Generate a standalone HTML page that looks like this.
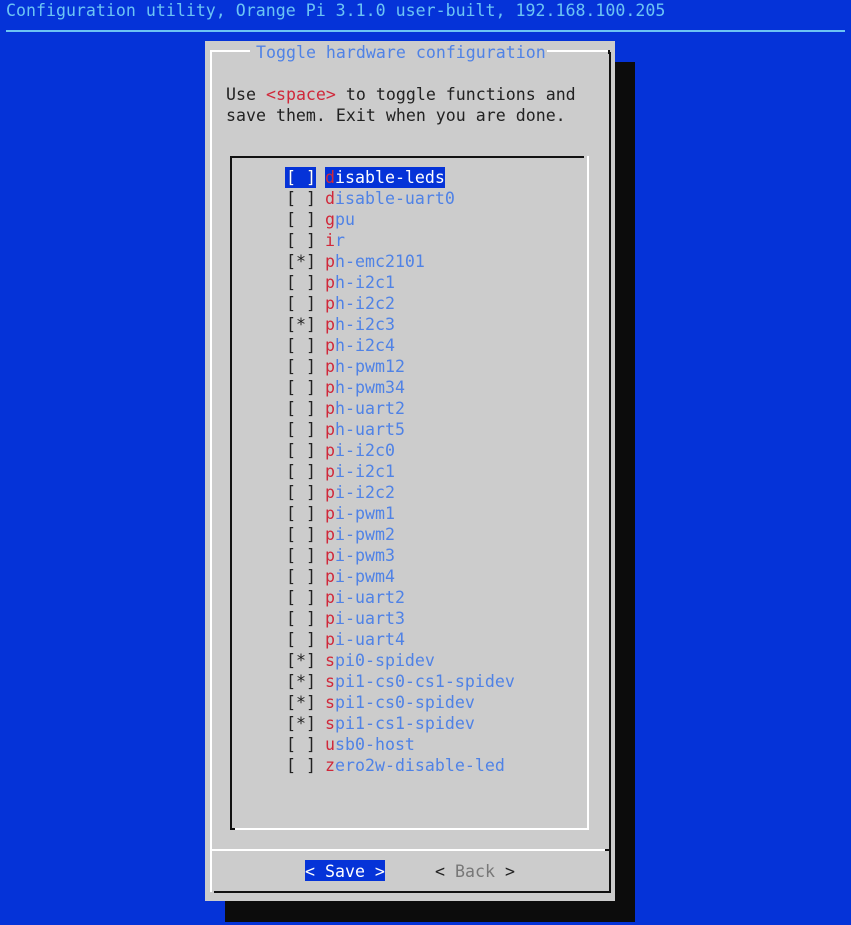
<!DOCTYPE html>
<html><head><meta charset="utf-8"><style>
html,body{margin:0;padding:0}
body{width:851px;height:925px;background:#0533d8;position:relative;overflow:hidden;font-family:"DejaVu Sans Mono","Liberation Mono",monospace;font-size:16.6px}
.a{position:absolute;white-space:pre;line-height:21px}
.b{position:absolute}
.r{color:#d0283a}
.l{color:#4f82e6}
.k{color:#222}
</style></head><body>
<div class="a" style="left:6px;top:0px;color:#6cc4f4">Configuration utility, Orange Pi 3.1.0 user-built, 192.168.100.205</div>
<div class="b" style="left:6px;top:30px;width:839px;height:2px;background:#6cc4f4"></div>
<div class="b" style="left:225px;top:62px;width:410px;height:860px;background:#0c0c0c"></div>
<div class="b" style="left:205px;top:41px;width:410px;height:860px;background:#cccccc"></div>
<div class="b" style="left:210px;top:50px;width:40px;height:2px;background:#fff"></div>
<div class="b" style="left:547px;top:50px;width:63px;height:2px;background:#fff"></div>
<div class="b" style="left:608px;top:50px;width:2px;height:4px;background:#111"></div>
<div class="b" style="left:210px;top:50px;width:2px;height:842px;background:#fff"></div>
<div class="b" style="left:609px;top:52px;width:2px;height:840px;background:#111"></div>
<div class="b" style="left:214px;top:891px;width:397px;height:2px;background:#111"></div>
<div class="a" style="left:256px;top:42px;color:#4f82e6">Toggle hardware configuration</div>
<div class="a k" style="left:226px;top:84px">Use <span class="r">&lt;space&gt;</span> to toggle functions and
save them. Exit when you are done.</div>
<div class="b" style="left:230px;top:156px;width:354px;height:2px;background:#111"></div>
<div class="b" style="left:230px;top:156px;width:2px;height:674px;background:#111"></div>
<div class="b" style="left:230px;top:828px;width:5px;height:2px;background:#111"></div>
<div class="b" style="left:587px;top:156px;width:2px;height:674px;background:#fff"></div>
<div class="b" style="left:235px;top:828px;width:354px;height:2px;background:#fff"></div>
<div class="b" style="left:211px;top:849px;width:395px;height:2px;background:#fff"></div>
<div class="b" style="left:605px;top:849px;width:5px;height:2px;background:#111"></div>
<div class="b" style="left:285px;top:167px;width:31px;height:21px;background:#0533d8"></div>
<div class="b" style="left:325px;top:167px;width:120px;height:21px;background:#0533d8"></div>
<div class="a" style="left:286px;top:167px;color:#222">[ ]
[ ]
[ ]
[ ]
[*]
[ ]
[ ]
[*]
[ ]
[ ]
[ ]
[ ]
[ ]
[ ]
[ ]
[ ]
[ ]
[ ]
[ ]
[ ]
[ ]
[ ]
[ ]
[*]
[*]
[*]
[*]
[ ]
[ ]</div>
<div class="a" style="left:286px;top:167px;color:#fff">[ ]</div>
<div class="a" style="left:325px;top:167px"><span class="r">d</span><span style="color:#fff">isable-leds</span>
<span class="r">d</span><span class="l">isable-uart0</span>
<span class="r">g</span><span class="l">pu</span>
<span class="r">i</span><span class="l">r</span>
<span class="r">p</span><span class="l">h-emc2101</span>
<span class="r">p</span><span class="l">h-i2c1</span>
<span class="r">p</span><span class="l">h-i2c2</span>
<span class="r">p</span><span class="l">h-i2c3</span>
<span class="r">p</span><span class="l">h-i2c4</span>
<span class="r">p</span><span class="l">h-pwm12</span>
<span class="r">p</span><span class="l">h-pwm34</span>
<span class="r">p</span><span class="l">h-uart2</span>
<span class="r">p</span><span class="l">h-uart5</span>
<span class="r">p</span><span class="l">i-i2c0</span>
<span class="r">p</span><span class="l">i-i2c1</span>
<span class="r">p</span><span class="l">i-i2c2</span>
<span class="r">p</span><span class="l">i-pwm1</span>
<span class="r">p</span><span class="l">i-pwm2</span>
<span class="r">p</span><span class="l">i-pwm3</span>
<span class="r">p</span><span class="l">i-pwm4</span>
<span class="r">p</span><span class="l">i-uart2</span>
<span class="r">p</span><span class="l">i-uart3</span>
<span class="r">p</span><span class="l">i-uart4</span>
<span class="r">s</span><span class="l">pi0-spidev</span>
<span class="r">s</span><span class="l">pi1-cs0-cs1-spidev</span>
<span class="r">s</span><span class="l">pi1-cs0-spidev</span>
<span class="r">s</span><span class="l">pi1-cs1-spidev</span>
<span class="r">u</span><span class="l">sb0-host</span>
<span class="r">z</span><span class="l">ero2w-disable-led</span></div>
<div class="b" style="left:305px;top:860px;width:80px;height:21px;background:#0533d8"></div>
<div class="a" style="left:305px;top:861px;color:#fff">&lt; Save &gt;</div>
<div class="a" style="left:435px;top:861px;color:#222">&lt; <span style="color:#777">Back</span> &gt;</div>
</body></html>
